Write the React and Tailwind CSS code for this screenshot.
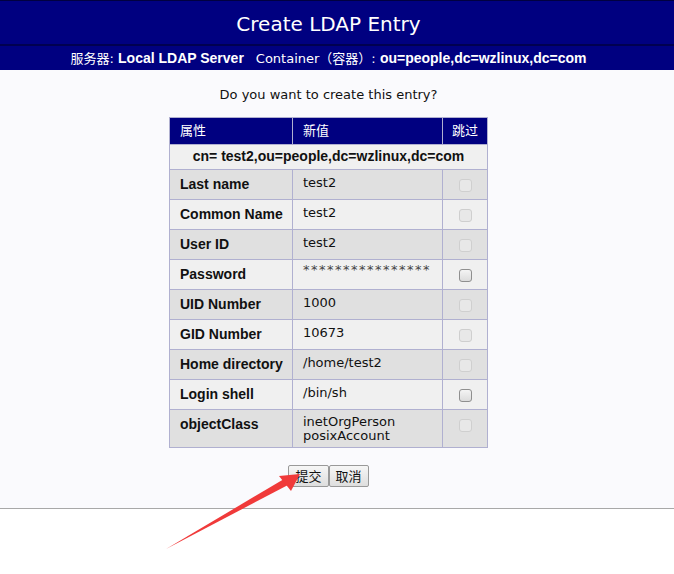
import React from 'react';

const rows = [
    { name: 'Last name', value: ['test2'], dark: true, enabled: false },
    { name: 'Common Name', value: ['test2'], dark: false, enabled: false },
    { name: 'User ID', value: ['test2'], dark: true, enabled: false },
    { name: 'Password', value: ['****************'], dark: false, enabled: true, stars: true },
    { name: 'UID Number', value: ['1000'], dark: true, enabled: false },
    { name: 'GID Number', value: ['10673'], dark: false, enabled: false },
    { name: 'Home directory', value: ['/home/test2'], dark: true, enabled: false },
    { name: 'Login shell', value: ['/bin/sh'], dark: false, enabled: true },
    { name: 'objectClass', value: ['inetOrgPerson', 'posixAccount'], dark: true, enabled: false },
];

function Box({ enabled }) {
    return (
        <span
            className={
                enabled
                    ? 'inline-block w-[13px] h-[13px] rounded-[3px] border border-[#8f8f8f] bg-gradient-to-b from-[#f4f4f4] to-[#dcdcdc]'
                    : 'inline-block w-[13px] h-[13px] rounded-[3px] border border-[#cfcfcf] bg-[#e8e8e8]'
            }
        />
    );
}

export default function App() {
    return (
        <div className="relative w-[674px] h-[574px] bg-white font-['DejaVu_Sans','Noto_Sans_CJK_SC',sans-serif] text-[13px] text-[#111]">
            <div className="h-[46px] bg-[#000080] border-t border-[#000040] border-b-2 border-b-[#000050] flex items-center justify-center pr-[17px] pt-[2px] text-white text-[20px]">
                Create LDAP Entry
            </div>
            <div className="h-[24px] bg-[#000080] flex items-center justify-center pr-[17px] text-white text-[13px]">
                <span>服务器: <b className="font-['Liberation_Sans',sans-serif] text-[14px]">Local LDAP Server</b></span>
                <span className="ml-3">Container（容器）: <b className="font-['Liberation_Sans',sans-serif] text-[14px]">ou=people,dc=wzlinux,dc=com</b></span>
            </div>
            <div className="bg-[#fafafd] h-[439px] border-b border-[#a8a8a8] flex flex-col items-center pr-[17px]">
                <div className="mt-[15px] mb-[12px]">Do you want to create this entry?</div>
                <table className="border-collapse border border-[#b0b0d0] w-[318px] table-fixed">
                    <thead>
                        <tr className="bg-[#000080] text-white h-[27px] text-left">
                            <th className="font-normal w-[123px] px-[10px] border border-[#b0b0d0]">属性</th>
                            <th className="font-normal w-[150px] px-[10px] border border-[#b0b0d0]">新值</th>
                            <th className="font-normal w-[45px] px-[4px] border border-[#b0b0d0] text-center">跳过</th>
                        </tr>
                    </thead>
                    <tbody>
                        <tr className="bg-[#f0f0f0] h-[25px]">
                            <td colSpan={3} className="text-center font-bold font-['Liberation_Sans',sans-serif] text-[14px] whitespace-nowrap border border-[#b0b0d0]">
                                cn= test2,ou=people,dc=wzlinux,dc=com
                            </td>
                        </tr>
                        {rows.map((r) => (
                            <tr key={r.name} className={r.dark ? 'bg-[#e0e0e0]' : 'bg-[#f0f0f0]'}>
                                <td className="align-top font-bold font-['Liberation_Sans',sans-serif] text-[14px] whitespace-nowrap pl-[10px] pt-[4px] h-[30px] border border-[#b0b0d0]">{r.name}</td>
                                <td className="align-top px-[10px] pt-[5px] pb-[4px] border border-[#b0b0d0] leading-[14px] whitespace-nowrap">
                                    {r.value.map((v) => (
                                        <div key={v} className={r.stars ? 'tracking-[1.5px] text-[#444] -mt-[2px]' : r.value.length > 1 ? '' : 'leading-[16px]'}>{v}</div>
                                    ))}
                                </td>
                                <td className="align-top text-center pt-[8px] border border-[#b0b0d0]">
                                    <Box enabled={r.enabled} />
                                </td>
                            </tr>
                        ))}
                    </tbody>
                </table>
                <div className="mt-[17px] flex">
                    <button className="h-[22px] px-[6px] border border-[#999] rounded-[2px] bg-gradient-to-b from-[#f6f6f6] to-[#dedede] text-[13px] font-['Noto_Sans_CJK_SC',sans-serif] leading-none">提交</button>
                    <button className="h-[22px] px-[6px] border border-[#999] rounded-[2px] bg-gradient-to-b from-[#f6f6f6] to-[#dedede] text-[13px] font-['Noto_Sans_CJK_SC',sans-serif] leading-none">取消</button>
                </div>
            </div>
            <svg className="absolute left-0 top-0 pointer-events-none" width="674" height="574">
                <polygon points="166,549 284,479 288,485" fill="#f03a3a" />
                <polygon points="300,474 279,476 291,491" fill="#f03a3a" />
            </svg>
        </div>
    );
}
